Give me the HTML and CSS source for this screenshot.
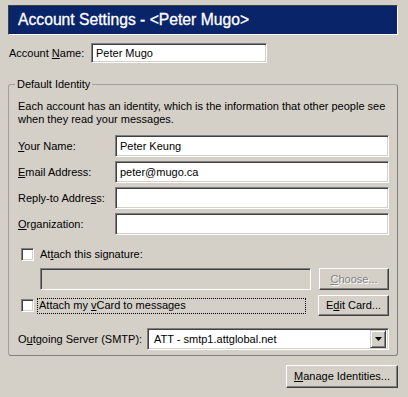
FILE: index.html
```html
<!DOCTYPE html>
<html>
<head>
<meta charset="utf-8">
<link rel="stylesheet" href="styles.css">
</head>
<body>
<div class="page">
  <div class="header">Account Settings - &lt;Peter Mugo&gt;</div>

  <div class="acct-row">
    <label class="acct-label">Account <u>N</u>ame:</label>
    <div class="field acct-field">Peter Mugo</div>
  </div>

  <fieldset class="group">
    <legend>Default Identity</legend>
    <p class="desc">Each account has an identity, which is the information that other people see<br>when they read your messages.</p>

    <div class="grid">
      <label><u>Y</u>our Name:</label>
      <div class="field">Peter Keung</div>
      <label><u>E</u>mail Address:</label>
      <div class="field">peter@mugo.ca</div>
      <label>Reply-to Addre<u>s</u>s:</label>
      <div class="field"></div>
      <label><u>O</u>rganization:</label>
      <div class="field"></div>
    </div>

    <div class="check-row sig-row">
      <span class="checkbox"></span>
      <span class="check-label">At<u>t</u>ach this signature:</span>
    </div>
    <div class="sig-file">
      <div class="field disabled-field"></div>
      <div class="button disabled"><span><u>C</u>hoose...</span></div>
    </div>
    <div class="vcard-row">
      <span class="checkbox"></span>
      <span class="check-label focus">Attach my <u>v</u>Card to messages</span>
      <div class="button edit-btn">E<u>d</u>it Card...</div>
    </div>

    <div class="smtp-row">
      <label>O<u>u</u>tgoing Server (SMTP):</label>
      <div class="field select">
        <span class="select-text">ATT - smtp1.attglobal.net</span>
        <span class="drop">
          <svg width="7" height="4" viewBox="0 0 7 4"><path d="M0 0H7L3.5 4Z" fill="#000"/></svg>
        </span>
      </div>
    </div>
  </fieldset>

  <div class="bottom">
    <div class="button manage"><u>M</u>anage Identities...</div>
  </div>
</div>
</body>
</html>
```

FILE: styles.css
```css
html, body {
  margin: 0;
  padding: 0;
  background: #d4d0c8;
}
body {
  font-family: "Liberation Sans", Arial, sans-serif;
  font-size: 11px;
  line-height: 13px;
  color: #000;
}
u { text-decoration: underline; text-underline-offset: 1px; }

.page {
  padding: 5px 10px 0 8px;
}

.header {
  height: 28px;
  background: #0a246a;
  border: 1px solid;
  border-color: #404040 #ffffff #ffffff #404040;
  color: #fff;
  font-size: 15.7px;
  font-weight: normal;
  -webkit-text-stroke: 0.3px #fff;
  line-height: 28px;
  padding-left: 9px;
}

.acct-row {
  display: flex;
  align-items: center;
  margin-top: 8px;
}
.acct-label {
  width: 82px;
  padding-left: 1px;
}

.field {
  box-sizing: border-box;
  height: 22px;
  background: #fff;
  border: 1px solid;
  border-color: #808080 #ffffff #ffffff #808080;
  box-shadow: inset 1px 1px 0 #404040, inset -1px -1px 0 #d4d0c8;
  padding: 0 4px;
  line-height: 20px;
  white-space: nowrap;
  overflow: hidden;
}
.acct-field {
  width: 176px;
  height: 20px;
  line-height: 18px;
}

.group {
  margin: 15px 0 0 0;
  border: 1px solid;
  border-color: #a0a0a0 #808080 #808080 #a0a0a0;
  border-radius: 3px;
  padding: 0 8px 5px 9px;
}
.group legend {
  padding: 0 2px;
  margin-left: -3px;
  line-height: 13px;
}

.desc {
  margin: 9px 0 0 0;
  white-space: nowrap;
}

.grid {
  display: grid;
  grid-template-columns: 97px 1fr;
  row-gap: 4px;
  align-items: center;
  margin-top: 9px;
}

.checkbox {
  box-sizing: border-box;
  width: 13px;
  height: 13px;
  background: #fff;
  border: 1px solid;
  border-color: #808080 #ffffff #ffffff #808080;
  box-shadow: inset 1px 1px 0 #404040, inset -1px -1px 0 #d4d0c8;
  flex: none;
}

.check-row {
  display: flex;
  align-items: center;
  padding-left: 3px;
}
.sig-row {
  margin-top: 13px;
}
.check-label {
  margin-left: 6px;
}

.sig-file {
  display: flex;
  align-items: center;
  margin-top: 7px;
  padding-left: 22px;
}
.disabled-field {
  background: #d4d0c8;
  width: 271px;
}

.button {
  box-sizing: border-box;
  display: flex;
  align-items: center;
  justify-content: center;
  background: #d4d0c8;
  border: 1px solid;
  border-color: #ffffff #404040 #404040 #ffffff;
  box-shadow: inset -1px -1px 0 #808080;
  white-space: nowrap;
}
.sig-file .button {
  width: 70px;
  height: 22px;
  margin-left: auto;
}
.disabled {
  color: #808080;
  text-shadow: 1px 1px 0 #fff;
}

.vcard-row {
  display: flex;
  align-items: center;
  margin-top: 5px;
  padding-left: 3px;
}
.focus {
  flex: 1;
  margin-left: 3px;
  margin-right: 12px;
  padding: 1px 2px 2px 2px;
  outline: 1px dotted #000;
  outline-offset: -1px;
}
.edit-btn {
  width: 71px;
  height: 21px;
}

.smtp-row {
  display: flex;
  align-items: center;
  margin-top: 12px;
}
.smtp-row label {
  width: 129px;
}
.select {
  flex: 1;
  display: flex;
  align-items: center;
  padding: 2px 2px 2px 6px;
}
.select-text {
  flex: 1;
  line-height: 16px;
}
.drop {
  box-sizing: border-box;
  width: 16px;
  height: 18px;
  display: flex;
  align-items: center;
  justify-content: center;
  background: #d4d0c8;
  border: 1px solid;
  border-color: #d4d0c8 #404040 #404040 #d4d0c8;
  box-shadow: inset 1px 1px 0 #fff, inset -1px -1px 0 #808080;
}

.bottom {
  display: flex;
  justify-content: flex-end;
  margin-top: 9px;
}
.manage {
  width: 112px;
  height: 23px;
}
```
